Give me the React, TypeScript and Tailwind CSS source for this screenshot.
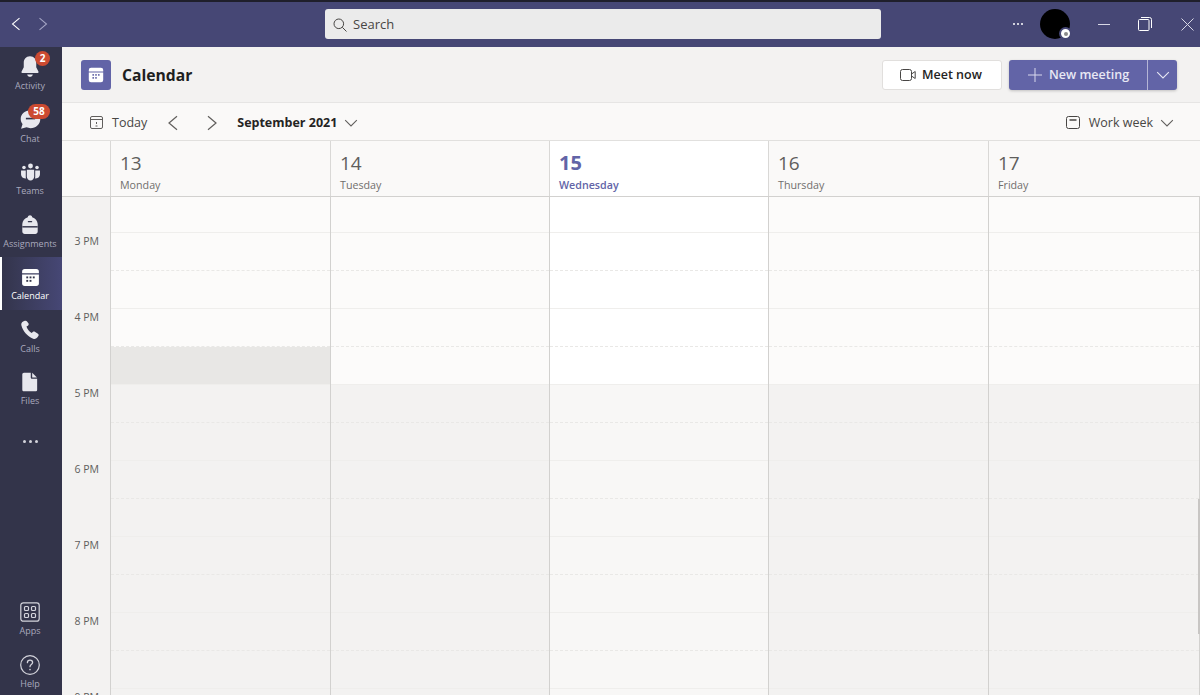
const days = [
  { num: "13", name: "Monday", width: "w-[220px]" },
  { num: "14", name: "Tuesday", width: "w-[219px]" },
  { num: "15", name: "Wednesday", width: "w-[219px]", today: true },
  { num: "16", name: "Thursday", width: "w-[220px]" },
  { num: "17", name: "Friday", width: "flex-1" },
];

const hours = ["3 PM", "4 PM", "5 PM", "6 PM", "7 PM", "8 PM", "9 PM"];

const slotCount = 14;

function BellIcon() {
  return (
    <svg width="24" height="24" viewBox="0 0 20 20" fill="#e8e8ee">
      <path d="M10 1C6.600 1 4.800 3.500 4.800 6.600v3.600L2.900 14c-.2.500.1 1 .6 1h13c.5 0 .8-.5.6-1l-1.900-3.800V6.600C15.200 3.500 13.400 1 10 1z" />
      <path d="M7.600 16.300c.4 1.200 1.300 1.900 2.400 1.900s2-.7 2.400-1.900z" />
    </svg>
  );
}

function ChatIcon() {
  return (
    <svg width="23" height="23" viewBox="0 0 20 20">
      <path d="M10 2C5.300 2 1.500 5.300 1.500 9.500c0 1.700.6 3.200 1.600 4.500L1.800 18l4.700-1.200c1.100.5 2.300.7 3.500.7 4.700 0 8.500-3.400 8.500-8S14.700 2 10 2z" fill="#e8e8ee" />
      <rect x="6" y="8.500" width="8" height="1.400" fill="#33344a" />
    </svg>
  );
}

function TeamsIcon() {
  return (
    <svg width="21" height="21" viewBox="0 0 20 20" fill="#e8e8ee">
      <circle cx="10" cy="3.800" r="2.300" />
      <circle cx="3.800" cy="5.200" r="1.700" />
      <circle cx="16.200" cy="5.200" r="1.700" />
      <path d="M6.500 7.400h7v6.400c0 2-1.500 3.800-3.500 3.800s-3.500-1.800-3.500-3.800z" />
      <path d="M1 8h4.500v6c0 .7.100 1.200.3 1.700C3 15.700 1 14 1 11.800zM19 8h-4.500v6c0 .7-.1 1.200-.3 1.700 2.800 0 4.800-1.700 4.800-3.900z" />
    </svg>
  );
}

function AssignmentsIcon() {
  return (
    <svg width="22" height="22" viewBox="0 0 20 20">
      <path d="M10 1.200c-1 0-1.800.7-2 1.700C5.200 3.800 3.200 6 3 9v7c0 1.200 1 2.200 2.200 2.200h9.600c1.200 0 2.200-1 2.200-2.200V9c-.2-3-2.200-5.200-5-6.100-.2-1-1-1.700-2-1.700z" fill="#e8e8ee" />
      <rect x="3" y="11" width="14" height="1.300" fill="#33344a" />
      <rect x="8" y="6.300" width="4" height="1.300" rx=".6" fill="#33344a" />
    </svg>
  );
}

function CalendarIcon({ size = 21, dots = "#33344a" }: { size?: number; dots?: string }) {
  return (
    <svg width={size} height={size} viewBox="0 0 20 20">
      <path d="M4.500 2h11A2.500 2.500 0 0 1 18 4.500V6H2V4.500A2.500 2.500 0 0 1 4.500 2z" fill="#fff" />
      <path d="M2 7.200h16v8.300a2.500 2.500 0 0 1-2.500 2.500h-11A2.500 2.500 0 0 1 2 15.500z" fill="#fff" />
      <g fill={dots}>
        <rect x="6" y="9" width="1.800" height="1.800" />
        <rect x="9.100" y="9" width="1.800" height="1.800" />
        <rect x="12.200" y="9" width="1.800" height="1.800" />
        <rect x="6" y="12.300" width="1.800" height="1.800" />
        <rect x="9.100" y="12.300" width="1.800" height="1.800" />
      </g>
    </svg>
  );
}

function CallsIcon() {
  return (
    <svg width="22" height="22" viewBox="0 0 20 20" fill="#e8e8ee">
      <path d="M5.300 1.600 3.700 2.300C2.300 3 1.800 4.500 2.200 6c1.500 5.400 5.500 10 10.700 12 1.400.5 2.800.1 3.700-1.100l1-1.400c.5-.7.3-1.600-.4-2.100l-2.800-1.800c-.6-.4-1.400-.3-1.900.2l-1 1c-2.200-1.300-3.900-3.500-4.700-5.900l1.300-.8c.6-.4.900-1.200.6-1.900L7.300 2.300c-.3-.7-1.300-1-2-.7z" />
    </svg>
  );
}

function FilesIcon() {
  return (
    <svg width="22" height="22" viewBox="0 0 20 20" fill="#e8e8ee">
      <path d="M4.500 1.500h6.200v4.300c0 .7.500 1.200 1.200 1.200h4.600v10c0 .8-.7 1.500-1.500 1.500H4.500c-.8 0-1.500-.7-1.500-1.500V3c0-.8.7-1.500 1.500-1.500z" />
      <path d="M12 1.700v4.100h4.300z" />
    </svg>
  );
}

function AppsIcon() {
  return (
    <svg width="20" height="20" viewBox="0 0 20 20" fill="none" stroke="#d4d4dc" strokeWidth="1.200">
      <rect x=".8" y=".8" width="18.400" height="18.400" rx="2.500" />
      <rect x="4.500" y="4.500" width="4" height="4" rx="1" />
      <rect x="11.500" y="4.500" width="4" height="4" rx="1" />
      <rect x="4.500" y="11.500" width="4" height="4" rx="1" />
      <rect x="11.500" y="11.500" width="4" height="4" rx="1" />
    </svg>
  );
}

function HelpIcon() {
  return (
    <svg width="20" height="20" viewBox="0 0 20 20" fill="none" stroke="#d4d4dc" strokeWidth="1.200">
      <circle cx="10" cy="10" r="9.300" />
      <path d="M7.400 7.700c0-1.500 1.100-2.500 2.600-2.500s2.600 1 2.600 2.300c0 2-2.600 2.100-2.600 4.200" strokeLinecap="round" strokeWidth="1.300" />
      <circle cx="10" cy="14.600" r=".8" fill="#d4d4dc" stroke="none" />
    </svg>
  );
}

function Chevron({ dir, color, size = 12 }: { dir: "left" | "right" | "down"; color: string; size?: number }) {
  const d = dir === "left" ? "M9 1 3 6l6 5" : dir === "right" ? "M3 1l6 5-6 5" : "M1 3.500 6 8.500l5-5";
  return (
    <svg className="block" width={size} height={size} viewBox="0 0 12 12" fill="none" stroke={color} strokeWidth="0.9">
      <path d={d} />
    </svg>
  );
}

function NavItem({
  label,
  icon,
  badge,
  active,
}: {
  label: string;
  icon: React.ReactNode;
  badge?: string;
  active?: boolean;
}) {
  return (
    <div
      className={`relative flex h-[52.5px] flex-col items-center pr-[2px] pt-[8px] ${
        active ? "bg-gradient-to-r from-[#33344a] to-[#464775] text-white" : "text-[#a9a9bd]"
      }`}
    >
      {active && <div className="absolute bottom-0 left-0 top-0 w-[2px] bg-white" />}
      <div className="relative flex h-[24px] w-[24px] items-center justify-center">
        {icon}
        {badge && (
          <span
            className={`absolute top-[-4px] flex h-[15px] items-center justify-center rounded-full bg-[#cc4a31] text-[10px] font-bold text-white ${
              badge.length > 1 ? "left-[10px] w-[22px]" : "left-[17px] w-[15px]"
            }`}
          >
            {badge}
          </span>
        )}
      </div>
      <span className="text-[9px] leading-[14px]">{label}</span>
    </div>
  );
}

export default function App() {
  return (
    <div className="flex h-[695px] w-[1200px] flex-col overflow-hidden bg-[#f3f2f1] font-['Open_Sans','Noto_Sans',sans-serif] text-[#252423]">
      {/* title bar */}
      <div className="flex h-[47px] shrink-0 items-center border-t-[2px] border-[#1f1f2b] bg-[#464775] pb-[1px]">
        <div className="flex w-[325px] items-center gap-[13px] pl-[9px]">
          <Chevron dir="left" color="#ffffff" size={14} />
          <Chevron dir="right" color="#a5a6c5" size={14} />
        </div>
        <div className="flex h-[30px] w-[556px] items-center gap-[6px] rounded-[3px] bg-[#ebebeb] pl-[8px] pt-[1px] text-[13px] text-[#484644]">
          <svg width="14" height="14" viewBox="0 0 14 14" fill="none" stroke="#484644" strokeWidth="1">
            <circle cx="5.800" cy="5.800" r="4.800" />
            <path d="m9.300 9.300 4.200 4.200" />
          </svg>
          Search
        </div>
        <div className="ml-[132px] flex gap-[2px]">
          <span className="h-[2px] w-[2px] rounded-full bg-white" />
          <span className="h-[2px] w-[2px] rounded-full bg-white" />
          <span className="h-[2px] w-[2px] rounded-full bg-white" />
        </div>
        <div className="relative ml-[17px] h-[30px] w-[30px] rounded-full bg-black">
          <div className="absolute bottom-[-1px] right-[-2px] flex h-[13px] w-[13px] items-center justify-center rounded-full border-[2px] border-[#464775] bg-white">
            <span className="h-[4px] w-[4px] rounded-full bg-[#8a8a8a]" />
          </div>
        </div>
        <div className="ml-[28px] h-[1px] w-[12px] bg-[#d8d8e6]" />
        <svg className="ml-[28px]" width="14" height="14" viewBox="0 0 14 14" fill="none" stroke="#ffffff" strokeWidth="1">
          <rect x=".5" y="2.500" width="10.500" height="11" rx="1" />
          <path d="M3 .5h8.500a2 2 0 0 1 2 2V11" />
        </svg>
        <svg className="ml-[29px]" width="13" height="13" viewBox="0 0 13 13" fill="none" stroke="#d8d8e6" strokeWidth="1">
          <path d="m.5.5 12 12M12.500.5l-12 12" />
        </svg>
      </div>

      <div className="flex min-h-0 flex-1">
        {/* app rail */}
        <div className="flex w-[62px] shrink-0 flex-col justify-between bg-[#33344a]">
          <div className="flex flex-col">
            <NavItem label="Activity" icon={<BellIcon />} badge="2" />
            <NavItem label="Chat" icon={<ChatIcon />} badge="58" />
            <NavItem label="Teams" icon={<TeamsIcon />} />
            <NavItem label="Assignments" icon={<AssignmentsIcon />} />
            <NavItem label="Calendar" icon={<CalendarIcon />} active />
            <NavItem label="Calls" icon={<CallsIcon />} />
            <NavItem label="Files" icon={<FilesIcon />} />
            <div className="flex h-[54px] items-center justify-center gap-[3px] pr-[2px]">
              <span className="h-[3px] w-[3px] rounded-full bg-[#d4d4dc]" />
              <span className="h-[3px] w-[3px] rounded-full bg-[#d4d4dc]" />
              <span className="h-[3px] w-[3px] rounded-full bg-[#d4d4dc]" />
            </div>
          </div>
          <div className="-mb-[2px] flex flex-col">
            <NavItem label="Apps" icon={<AppsIcon />} />
            <NavItem label="Help" icon={<HelpIcon />} />
          </div>
        </div>

        <div className="flex min-w-0 flex-1 flex-col">
          {/* page header */}
          <div className="flex h-[56px] shrink-0 items-center justify-between border-b border-[#e6e5e4] bg-[#f3f2f1] pl-[19px] pr-[23px] pt-[1px]">
            <div className="flex items-center gap-[11px]">
              <div className="flex h-[30px] w-[30px] items-center justify-center rounded-[3px] bg-[#6264a7]">
                <CalendarIcon size={18} dots="#6264a7" />
              </div>
              <span className="pt-[1px] text-[15.700px] font-bold text-[#1f1f1f]">Calendar</span>
            </div>
            <div className="flex items-center gap-[7px]">
              <div className="flex h-[30px] w-[120px] items-center gap-[6px] rounded-[3px] border border-[#e1dfdd] bg-white pl-[17px] text-[12.500px] font-semibold text-[#252423]">
                <svg width="16" height="12" viewBox="0 0 16 12" fill="none" stroke="#484644" strokeWidth="1">
                  <rect x=".5" y=".5" width="11" height="11" rx="2" />
                  <path d="m11.500 5 3.700-2.500v7L11.500 7" />
                </svg>
                <span className="pt-[1px]">Meet now</span>
              </div>
              <div className="flex h-[30px] w-[168px] overflow-hidden rounded-[3px] bg-[#6264a7] text-[12.500px] font-semibold text-[#e8e8f4] shadow-[0_1px_3px_rgba(0,0,0,0.2)]">
                <div className="flex w-[139px] items-center gap-[7px] border-r border-[#b5b6d6] pl-[19px]">
                  <svg width="14" height="14" viewBox="0 0 14 14" stroke="#d8d8ec" strokeWidth="1">
                    <path d="M7 0v14M0 7h14" />
                  </svg>
                  <span className="pt-[1px]">New meeting</span>
                </div>
                <div className="flex flex-1 items-center justify-center">
                  <Chevron dir="down" color="#e8e8f4" size={14} />
                </div>
              </div>
            </div>
          </div>

          {/* toolbar */}
          <div className="flex h-[38px] shrink-0 items-center border-b border-[#e1e0de] bg-[#faf9f8] pl-[28px] pr-[26px] pt-[2px] text-[12.500px]">
            <svg width="13" height="13" viewBox="0 0 13 13" fill="none" stroke="#605e5c" strokeWidth="1">
              <rect x=".5" y=".5" width="12" height="12" rx="1.500" />
              <path d="M.5 3.500h12" />
              <path d="M6.500 6v2" />
              <path d="M5.500 10h2" />
            </svg>
            <span className="ml-[9px] pt-[1px] text-[#484644]">Today</span>
            <div className="ml-[18px]">
              <Chevron dir="left" color="#605e5c" size={16} />
            </div>
            <div className="ml-[23px]">
              <Chevron dir="right" color="#605e5c" size={16} />
            </div>
            <span className="ml-[17px] pt-[1px] font-bold text-[#252423]">September 2021</span>
            <div className="ml-[7px]">
              <Chevron dir="down" color="#605e5c" size={14} />
            </div>
            <div className="ml-auto flex items-center">
              <svg width="14" height="13" viewBox="0 0 14 13" fill="none" stroke="#484644" strokeWidth="1">
                <rect x=".5" y=".5" width="13" height="12" rx="2" />
                <path d="M3.500 4h7" strokeWidth="1.500" />
              </svg>
              <span className="ml-[9px] pt-[1px] text-[#484644]">Work week</span>
              <div className="ml-[7px]">
                <Chevron dir="down" color="#605e5c" size={14} />
              </div>
            </div>
          </div>

          {/* day headers */}
          <div className="flex h-[56px] shrink-0 border-b border-[#d2d1cf] bg-[#faf9f8]">
            <div className="w-[49px] shrink-0 border-r border-[#d9d8d6]" />
            {days.map((d) => (
              <div
                key={d.num}
                className={`flex flex-col border-r border-[#d9d8d6] pl-[9px] pt-[8px] last:border-r-0 ${d.width} ${
                  d.today ? "bg-white text-[#6264a7]" : "text-[#605e5c]"
                }`}
              >
                <span className={`leading-[28px] ${d.today ? "text-[20px] font-bold" : "text-[19px]"}`}>{d.num}</span>
                <span className={`pt-[1px] text-[10.700px] leading-[15px] ${d.today ? "font-semibold" : "text-[#716f6d]"}`}>
                  {d.name}
                </span>
              </div>
            ))}
          </div>

          {/* time grid */}
          <div className="relative flex min-h-0 flex-1 overflow-hidden">
            <div className="w-[49px] shrink-0 border-r border-[#d2d1cf] bg-[#f3f2f1] pt-[36px]">
              {hours.map((h) => (
                <div key={h} className="h-[76px] pr-[11px] text-right text-[10.500px] leading-[16px] text-[#605e5c]">
                  {h}
                </div>
              ))}
            </div>
            {days.map((d, col) => (
              <div key={d.num} className={`flex flex-col border-r border-[#d2d1cf] last:border-r-0 ${d.width}`}>
                {Array.from({ length: slotCount }).map((_, i) => {
                  const isOff = i >= 5;
                  const selected = col === 0 && i === 4;
                  let bg = d.today ? "bg-white" : "bg-[#fcfbfa]";
                  if (isOff) bg = d.today ? "bg-[#f8f7f6]" : "bg-[#f3f2f1]";
                  if (selected) bg = "bg-[#e8e7e5]";
                  const solid = i % 2 === 0;
                  return (
                    <div
                      key={i}
                      className={`shrink-0 border-b ${i === 0 ? "h-[36px]" : "h-[38px]"} ${bg} ${
                        solid ? "border-solid border-[#efeeec]" : "border-dashed border-[#e9e8e6]"
                      }`}
                    />
                  );
                })}
              </div>
            ))}
            <div className="absolute right-0 top-[302px] h-[135px] w-[2px] bg-[#c8c6c4]" />
          </div>
        </div>
      </div>
    </div>
  );
}
